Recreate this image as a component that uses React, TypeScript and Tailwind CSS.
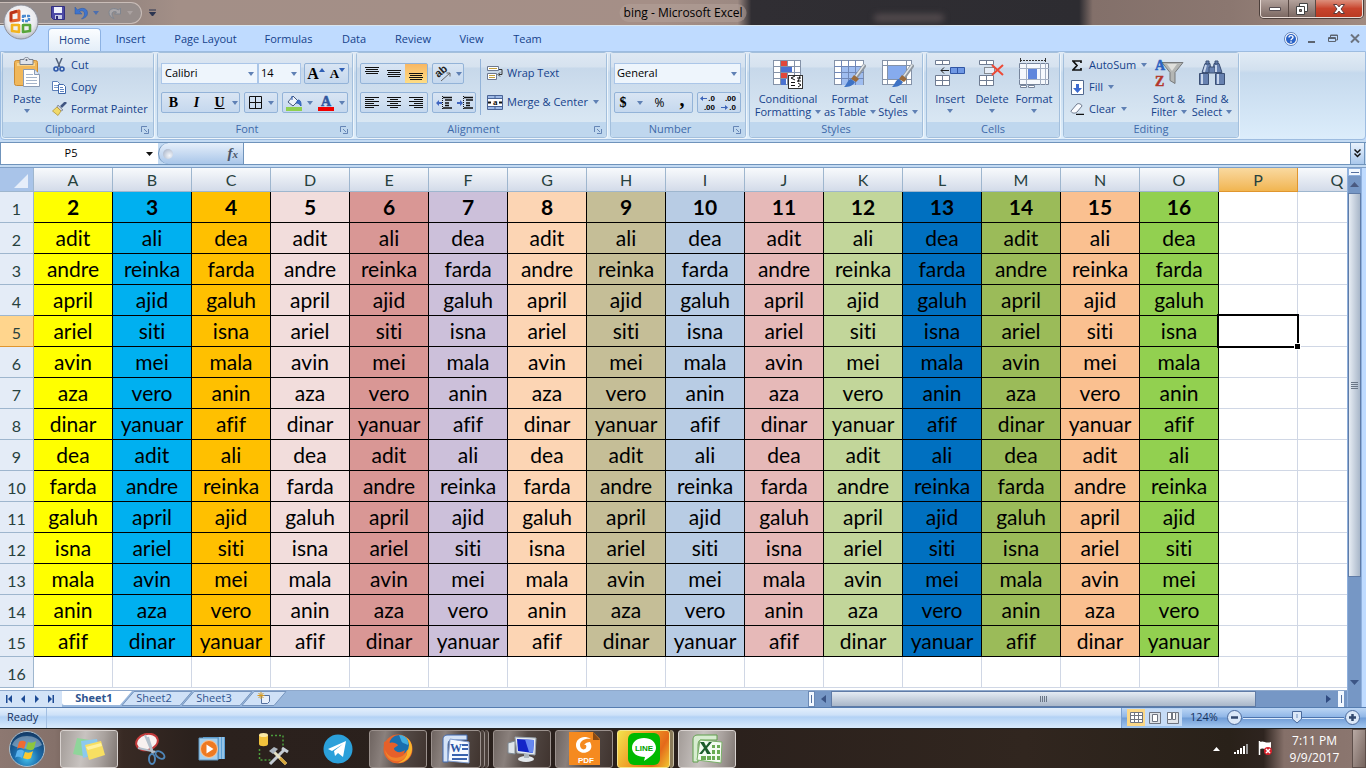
import React from "react";

const UI = "font-['Open_Sans','Noto_Sans',sans-serif]";

function Caret({ className = "text-[#5f80b4]" }: { className?: string }) {
  return (
    <svg width="6" height="4" viewBox="0 0 6 4" className={`shrink-0 ${className}`} aria-hidden="true">
      <path d="M0 0h6L3 4z" fill="currentColor" />
    </svg>
  );
}

/* ---------- Title bar ---------- */

function OfficeLogo() {
  return (
    <svg width="36" height="36" viewBox="0 0 36 36" aria-hidden="true">
      <defs>
        <radialGradient id="orb" cx="50%" cy="40%" r="60%">
          <stop offset="0" stopColor="#ffffff" />
          <stop offset="0.7" stopColor="#e9eaee" />
          <stop offset="1" stopColor="#b9bcc6" />
        </radialGradient>
      </defs>
      <circle cx="18" cy="18" r="17" fill="url(#orb)" stroke="#8d8f99" />
      <g fill="none" strokeLinejoin="round">
        <path d="M8 9l8-2v9l-8 1z" stroke="#e0622f" strokeWidth="3" />
        <path d="M8 17v-8l6-2" stroke="#b8321c" strokeWidth="2.4" />
        <path d="M20 12h6v5h-6z" stroke="#4a8ad0" strokeWidth="2.4" strokeDasharray="3 1" />
        <path d="M9 21h7v7l-7-1z" stroke="#f3b31d" strokeWidth="2.6" />
        <path d="M20 21h7v6l-7 1z" stroke="#57a63a" strokeWidth="2.6" />
      </g>
      <path d="M16 18h4v2h-4z" fill="#fff" />
    </svg>
  );
}

function TitleBar() {
  return (
    <header className="relative flex h-[26px] shrink-0 items-start justify-between border-b border-[#d9e6ef] bg-[linear-gradient(90deg,#77706f_0,#a38f87_13%,#a58f87_48%,#9c8982_54%,#302e33_55%,#2d2c31_79%,#83706a_80%,#8b7770_90%,#a08a80_100%)]">
      <div className="flex h-[25px] items-center">
        <div className="flex h-[22px] items-center gap-[9px] rounded-r-full border border-l-0 border-[#c9bdb8] bg-[#968d8b] pl-[51px] pr-2">
          <button aria-label="Save" type="button">
            <svg width="14" height="14" viewBox="0 0 14 14">
              <path d="M0.5 0.5h13v13h-11l-2-2z" fill="#4c49a5" stroke="#322f80" />
              <path d="M3 1h8v6H3z" fill="#eef1fb" />
              <path d="M4 9h7v4H4z" fill="#c9cde6" />
              <path d="M5 10h2v3H5z" fill="#2d2a75" />
            </svg>
          </button>
          <button aria-label="Undo" type="button" className="flex items-center gap-[5px]">
            <svg width="14" height="14" viewBox="0 0 14 14">
              <path d="M1 1v7h7L5.500 5.500C8 4 10.500 5 10.500 8c0 2-1 3-3 5 4-1 6-3 6-6 0-5-6-6-10-3z" fill="#3f74cc" stroke="#2b56a3" strokeWidth="0.5" />
            </svg>
            <Caret className="text-[#4d6fae]" />
          </button>
          <button aria-label="Redo" type="button" className="flex items-center gap-[5px]">
            <svg width="14" height="14" viewBox="0 0 14 14">
              <path d="M12.500 2v6h-6l2-2C6 5 4 6 4 8c0 2 1 3 2 4.500-3-1-5-3-5-6C1 3 6 1 10.500 4z" fill="#a9a6a9" stroke="#7f858f" />
            </svg>
            <Caret className="text-[#aaa2a1]" />
          </button>
        </div>
        <button aria-label="Customize Quick Access Toolbar" type="button" className="ml-[7px]">
          <svg width="7" height="8" viewBox="0 0 7 8">
            <path d="M0 1h7M0.5 3.5h6L3.5 7z" stroke="#2c3550" fill="#2c3550" strokeWidth="1" />
          </svg>
        </button>
      </div>
      <div className="absolute left-[64%] top-[14px] hidden h-2 w-[70px] rounded-full bg-[#6d5f60]/60 blur-[3px] lg:block" />
      <h1 className="absolute left-1/2 top-1 -translate-x-1/2 rounded-full bg-[#b5a39c]/50 px-1 text-[12px] leading-[18px] whitespace-nowrap text-black">
        bing - Microsoft Excel
      </h1>
      <div className="mr-[3px] flex h-[18px] overflow-hidden rounded-b border border-t-0 border-[#e9dcd6] shadow-[0_0_0_1px_#4c3f3b]">
        <button aria-label="Minimize" type="button" className="flex w-[28px] items-center justify-center border-r border-[#5a4a45] bg-gradient-to-b from-[#b3a29c] to-[#7c6963]">
          <svg width="12" height="6" viewBox="0 0 12 6"><path d="M0.5 1.5h11v3H0.5z" fill="#fff" stroke="#554c50" /></svg>
        </button>
        <button aria-label="Restore" type="button" className="flex w-[27px] items-center justify-center border-r border-[#5a4a45] bg-gradient-to-b from-[#b3a29c] to-[#7c6963]">
          <svg width="12" height="12" viewBox="0 0 12 12">
            <path d="M3.5 0.5h8v8h-8z" fill="#fff" stroke="#444" />
            <path d="M0.5 3.5h8v8h-8z" fill="#fff" stroke="#444" />
            <path d="M3.5 6.5h2v2h-2z" fill="#8b7771" stroke="#444" />
          </svg>
        </button>
        <button aria-label="Close" type="button" className="flex w-[46px] items-center justify-center bg-gradient-to-b from-[#dc8f7c] via-[#c8442d] to-[#b93a22]">
          <svg width="12" height="10" viewBox="0 0 12 10">
            <path d="M0.5 0.5h3.5l2 2.4 2-2.4h3.5L8 5l3.5 4.500H8L6 7.100 4 9.500H0.500L4 5z" fill="#fff" stroke="#5b3b3b" />
          </svg>
        </button>
      </div>
      <button aria-label="Office Button" type="button" className="absolute left-[3px] top-1 z-10">
        <OfficeLogo />
      </button>
    </header>
  );
}

/* ---------- Tabs ---------- */

const TABS = [
  { name: "Insert", w: "w-[59px]" },
  { name: "Page Layout", w: "w-[91px]" },
  { name: "Formulas", w: "w-[75px]" },
  { name: "Data", w: "w-[56px]" },
  { name: "Review", w: "w-[62px]" },
  { name: "View", w: "w-[55px]" },
  { name: "Team", w: "w-[57px]" },
];

function TabBar() {
  return (
    <nav className="flex h-[25px] shrink-0 items-end bg-[#bfdbff] pl-12 text-[11px] text-[#15428b]">
      <button type="button" className="h-[23px] w-[53px] rounded-t border border-b-0 border-[#8db2e3] bg-gradient-to-b from-[#fbfdff] to-[#e4eef8]">Home</button>
      {TABS.map((t) => (
        <button key={t.name} type="button" className={`h-[23px] whitespace-nowrap ${t.w}`}>{t.name}</button>
      ))}
      <div className="ml-auto flex h-full items-center gap-3 pr-[6px]">
        <button aria-label="Help" type="button" className="mr-[-2px]">
          <svg width="14" height="14" viewBox="0 0 14 14">
            <circle cx="7" cy="7" r="6.500" fill="#fff" stroke="#5f80b8" />
            <circle cx="7" cy="7" r="5" fill="#2a63c8" />
            <path d="M5 5.500C5 3 9 3 9 5.300 9 6.800 7 6.700 7 8.200M7 9.300v1.400" stroke="#fff" strokeWidth="1.400" fill="none" />
          </svg>
        </button>
        <button aria-label="Minimize workbook" type="button">
          <svg width="8" height="10" viewBox="0 0 8 10"><path d="M0 8h7" stroke="#5c6470" strokeWidth="2" /></svg>
        </button>
        <button aria-label="Restore workbook" type="button">
          <svg width="10" height="9" viewBox="0 0 10 9">
            <path d="M2.500 3V1h7v5H7.500M0.500 3.500h7v4h-7zM0.500 4.500h7M2.500 1.500h7" stroke="#5c6470" fill="none" />
          </svg>
        </button>
        <button aria-label="Close workbook" type="button">
          <svg width="10" height="9" viewBox="0 0 10 9"><path d="M1 0.500l8 8M9 0.500l-8 8" stroke="#6c7480" strokeWidth="2" /></svg>
        </button>
      </div>
    </nav>
  );
}

/* ---------- Ribbon ---------- */

function Group({ label, width, launcher, children }: { label: string; width: string; launcher?: boolean; children: React.ReactNode }) {
  return (
    <section aria-label={label} className={`flex h-[86px] shrink-0 flex-col rounded-[3px] border border-[#a3bfdc] shadow-[1px_1px_0_#eef5fb] ${width}`}>
      <div className="flex min-h-0 flex-1 bg-[linear-gradient(#dee8f3,#d6e2ef_20%,#c7d8ea_22%,#d9e7f3)]">{children}</div>
      <div className="relative flex h-[15px] shrink-0 items-center justify-center rounded-b-[3px] bg-[#bfd7ee] text-[11px] text-[#3e6aaa]">
        <h2 className={launcher ? "pr-4" : ""}>{label}</h2>
        {launcher && (
          <button aria-label={`${label} options`} type="button" className="absolute right-1 top-1">
            <svg width="8" height="8" viewBox="0 0 8 8">
              <path d="M0.500 6V0.500H6M3 3l3 3M7.500 3v4.500H3" fill="none" stroke="#6585b5" />
            </svg>
          </button>
        )}
      </div>
    </section>
  );
}

function Box({ children, className = "" }: { children: React.ReactNode; className?: string }) {
  return (
    <div className={`flex h-[21px] items-stretch rounded-[2px] border border-[#93b3d8] bg-gradient-to-b from-[#d9e5f3] to-[#c5d8ee] ${className}`}>{children}</div>
  );
}

function Tool({ label, className = "w-[23px]", children }: { label: string; className?: string; children: React.ReactNode }) {
  return (
    <button type="button" aria-label={label} className={`flex items-center justify-center ${className}`}>{children}</button>
  );
}

function Small({ icon, label, caret }: { icon: React.ReactNode; label: string; caret?: boolean }) {
  return (
    <button type="button" className="flex h-[22px] items-center gap-1 whitespace-nowrap">
      <span className="flex w-4 justify-center">{icon}</span>
      <span>{label}</span>
      {caret && <span className="ml-px"><Caret /></span>}
    </button>
  );
}

function Big({ icon, lines, width, caretBelow }: { icon: React.ReactNode; lines: string[]; width: string; caretBelow?: boolean }) {
  return (
    <button type="button" className={`flex flex-col items-center pt-1 leading-[13px] whitespace-nowrap ${width}`}>
      <span className="flex h-8 items-center">{icon}</span>
      <span className="mt-[3px]">{lines[0]}</span>
      {caretBelow ? (
        <span className="mt-1"><Caret /></span>
      ) : (
        <span className="flex items-center gap-1">{lines[1]}<Caret /></span>
      )}
    </button>
  );
}

function PasteIcon() {
  return (
    <svg width="28" height="32" viewBox="0 0 28 32" aria-hidden="true">
      <rect x="1.500" y="3.500" width="23" height="25" rx="2" fill="#f0b75a" stroke="#c98b35" />
      <path d="M4 6h18v3H4z" fill="#f8d48c" />
      <path d="M7 2.500h4c0-3 5-3 5 0h4v5H7z" fill="#dfe3ea" stroke="#77808f" />
      <circle cx="13.500" cy="3" r="1" fill="#5b6575" />
      <path d="M10.500 12.500h11l5 5v12h-16z" fill="#fff" stroke="#8a9bb5" />
      <path d="M21.500 12.500v5h5" fill="#dce6f3" stroke="#8a9bb5" />
      <path d="M13 17.500h7M13 20.500h11M13 23.500h11M13 26.500h11" stroke="#a5b4ca" />
    </svg>
  );
}

function CutIcon() {
  return (
    <svg width="12" height="14" viewBox="0 0 12 14" aria-hidden="true">
      <path d="M3 0l4 9M9 0L5 9" stroke="#56647c" strokeWidth="1.500" />
      <circle cx="3" cy="11" r="2" fill="none" stroke="#2e57a8" strokeWidth="1.600" />
      <circle cx="9" cy="11" r="2" fill="none" stroke="#2e57a8" strokeWidth="1.600" />
    </svg>
  );
}

function CopyIcon() {
  return (
    <svg width="16" height="13" viewBox="0 0 16 13" aria-hidden="true">
      <path d="M1.500 0.500h5l2 2v7h-7z" fill="#fff" stroke="#5c7fb8" />
      <path d="M3 4.500h4M3 6.500h4" stroke="#7b9bcb" />
      <path d="M7.500 3.500h5l2 2v7h-7z" fill="#fff" stroke="#3f68ab" />
      <path d="M9 6.500h3M9 8.500h4M9 10.500h4" stroke="#5f86c2" />
    </svg>
  );
}

function BrushIcon() {
  return (
    <svg width="15" height="14" viewBox="0 0 15 14" aria-hidden="true">
      <path d="M14 0L9 5" stroke="#3f5480" strokeWidth="2.600" />
      <path d="M6 3l5 5-2 1-4-4z" fill="#c7ccd6" stroke="#6e788c" strokeWidth="0.700" />
      <path d="M5 5l4 4-3 4.500L0.500 9z" fill="#f0d96a" stroke="#b4973a" strokeWidth="0.800" />
    </svg>
  );
}

function Lines({ rows, top = 0 }: { rows: [number, number][]; top?: number }) {
  return (
    <svg width="15" height="15" viewBox="0 0 15 15" aria-hidden="true">
      {rows.map(([x, w], i) => (
        <rect key={i} x={x} y={top + i * 2} width={w} height="1" fill="#111" />
      ))}
    </svg>
  );
}

const VERTICAL_ROWS: [number, number][] = [[0, 14], [1, 12], [0, 14], [1, 12]];

function IndentIcon({ right }: { right?: boolean }) {
  return (
    <svg width="16" height="14" viewBox="0 0 16 14" aria-hidden="true">
      <path d="M7 1.500h9M9 4h7M9 7h4M9 9.500h4M7 12h9" stroke="#111" strokeWidth="1.500" />
      <path d="M6.500 0v14" stroke="#111" strokeDasharray="1 1" />
      <path d={right ? "M0 6h3V4l3 3-3 3V8H0z" : "M6 6H3V4L0 7l3 3V8h3z"} fill="#4065c0" />
    </svg>
  );
}

function SheetGrid({ children, w = 30 }: { children?: React.ReactNode; w?: number }) {
  return (
    <svg width={w + 2} height="31" viewBox={`0 0 ${w + 2} 31`} aria-hidden="true">
      <rect x="0.500" y="2.500" width={w - 1} height="24" fill="#fff" stroke="#8492a8" />
      {children}
    </svg>
  );
}

function PaintBrush() {
  return (
    <g>
      <path d="M30 8L22 19" stroke="#8f979f" strokeWidth="4" strokeLinecap="round" />
      <path d="M30 7L22 18" stroke="#dfe3e6" strokeWidth="1.500" strokeLinecap="round" />
      <path d="M20 17l5 4-3 3-5-3z" fill="#9a6b3c" />
      <path d="M17 21l4 3c-2 4-6 5-11 5 3-2 3-7 7-8z" fill="#3e72c4" />
    </g>
  );
}

function ConditionalIcon() {
  return (
    <SheetGrid w={28}>
      <path d="M7 3h7v5H7zM7 15h8v6H7z" fill="#e2483a" />
      <path d="M7 9h12v6H7zM7 21h6v6H7z" fill="#4a72d0" />
      <path d="M0 8.500h28M0 14.500h28M0 20.500h28M7.500 2v25M14.500 2v25M21.500 2v25" stroke="#8492a8" />
      <path d="M8 9h11v5H8z" fill="#4a72d0" />
      <rect x="15.500" y="17.500" width="14" height="13" fill="#fff" stroke="#333" />
      <path d="M22 18l-4 2 4 2M18 24.500h4M18 27.500h4M24 20h4M24 23h4M27 18l-2 6M25 25l3 2-3 2" stroke="#111" fill="none" />
    </SheetGrid>
  );
}

function FormatTableIcon() {
  return (
    <SheetGrid>
      <path d="M7 9h22v18H7z" fill="#9fbdf0" />
      <path d="M0 8.500h30M0 14.500h30M0 20.500h30M7.500 2v25M14.500 2v25M21.500 2v25" stroke="#7088b8" />
      <PaintBrush />
    </SheetGrid>
  );
}

function CellStylesIcon() {
  return (
    <SheetGrid>
      <path d="M0 7.500h30M0 21.500h30M5.500 2v25M24.500 2v25" stroke="#8492a8" />
      <path d="M6 8h18v13H6z" fill="#86abee" />
      <PaintBrush />
    </SheetGrid>
  );
}

function InsertIcon() {
  return (
    <svg width="31" height="28" viewBox="0 0 31 28" aria-hidden="true">
      <path d="M0.500 1.500h14v4h-14zM7.500 1v5M0.500 16.500h14v10h-14zM0.500 21.500h14M7.500 16v10" fill="#fff" stroke="#6f7c92" />
      <path d="M15.500 8.500h14v6h-14z" fill="#6f98e4" stroke="#3156a5" />
      <path d="M22.500 8v7" stroke="#3156a5" />
      <path d="M14 11.500H6M9 8.500l-3 3 3 3" stroke="#222" fill="none" />
    </svg>
  );
}

function DeleteIcon() {
  return (
    <svg width="26" height="28" viewBox="0 0 26 28" aria-hidden="true">
      <path d="M0.500 1.500h14v4h-14zM7.500 1v5M0.500 16.500h14v10h-14zM0.500 21.500h14M7.500 16v10" fill="#fff" stroke="#6f7c92" />
      <path d="M5.500 8.500h10v6h-10z" fill="#e6edf7" stroke="#333" strokeDasharray="1 1" />
      <path d="M13 6l11 10M24 6L13 16" stroke="#ee4a36" strokeWidth="2" />
    </svg>
  );
}

function FormatIcon() {
  return (
    <svg width="32" height="31" viewBox="0 0 32 31" aria-hidden="true">
      <path d="M2 2.500h26M2.500 0v4M27.500 0v4" stroke="#333" strokeDasharray="2 1" />
      <path d="M1.500 5.500h29v21h-29z" fill="#f6f9fd" stroke="#76849b" />
      <path d="M1 10.500h30M1 21.500h30M8.500 5v22M22.500 5v22M27.500 5v22" stroke="#a3afc2" />
      <path d="M10 11h9v10h-9z" fill="#5f86dc" />
      <path d="M2.500 27.500h6v2h-6zM10.500 27.500h6v2h-6z" fill="#fff" stroke="#76849b" />
    </svg>
  );
}

function SortIcon() {
  return (
    <svg width="30" height="32" viewBox="0 0 30 32" className="overflow-visible" aria-hidden="true">
      <path d="M8 5.500h21l-8 10v11l-5-3v-8z" fill="#b4b6b4" stroke="#77797b" />
      <path d="M13 7h10l-5 7z" fill="#e0e0dc" />
      <text x="1" y="13" fontSize="14" fontWeight="bold" fill="#2c62c0" stroke="#2c62c0" strokeWidth="0.500" fontFamily="Liberation Serif, serif">A</text>
      <text x="1" y="29" fontSize="14" fontWeight="bold" fill="#b3362b" stroke="#b3362b" strokeWidth="0.500" fontFamily="Liberation Serif, serif">Z</text>
    </svg>
  );
}

function FindIcon() {
  return (
    <svg width="28" height="27" viewBox="0 0 28 27" aria-hidden="true">
      <g fill="#6781b0" stroke="#3c5075">
        <path d="M7 3.500h5l1 9H4z M16 3.500h5l3 9h-9z" />
        <path d="M11 7h6v6h-6z" />
        <path d="M1.500 13.500h9v11h-9zM17.500 13.500h9v11h-9z" />
        <path d="M8 1h3v3H8zM17 1h3v3h-3z" />
      </g>
      <path d="M4 14v10M20 14v10M8 5l-2 7M18 5v7" stroke="#c8d6ec" strokeWidth="2" />
    </svg>
  );
}

function Ribbon() {
  const serif = "font-['Liberation_Serif',serif]";
  return (
    <div className="flex h-[89px] shrink-0 gap-[3px] overflow-hidden rounded-b border border-[#9dbce0] bg-[linear-gradient(#e1ebf5,#d3e1ef_20%,#c5d9ed_24%,#dcedfb)] pl-px text-[11px] text-[#15428b]">
      <Group label="Clipboard" width="w-[152px]" launcher>
        <Big icon={<PasteIcon />} lines={["Paste"]} width="w-12" caretBelow />
        <div className="flex flex-col pt-px">
          <Small icon={<CutIcon />} label="Cut" />
          <Small icon={<CopyIcon />} label="Copy" />
          <Small icon={<BrushIcon />} label="Format Painter" />
        </div>
      </Group>

      <Group label="Font" width="w-[196px]" launcher>
        <div className="flex flex-col gap-2 pl-[3px] pt-[10px] text-black">
          <div className="flex">
            <label className="relative flex items-center">
              <select aria-label="Font" className="h-[21px] w-[97px] appearance-none border border-[#abc6e8] bg-[#eef5fc] pl-[3px] text-[11px]"><option>Calibri</option></select>
              <span className="absolute right-1"><Caret /></span>
            </label>
            <label className="relative flex items-center">
              <select aria-label="Font Size" className="h-[21px] w-[43px] appearance-none border border-[#abc6e8] bg-[#eef5fc] pl-[2px] text-[11px]"><option>14</option></select>
              <span className="absolute right-1"><Caret /></span>
            </label>
            <Box className="ml-[3px]">
              <Tool label="Grow Font" className="w-[22px]"><b className={`text-[16px] leading-[19px] ${serif}`}>A</b><span className="mb-2 rotate-180"><Caret className="text-[#2f5fb5]" /></span></Tool>
              <Tool label="Shrink Font" className="w-[21px]"><b className={`text-[13px] leading-[19px] ${serif}`}>A</b><span className="mb-2"><Caret className="text-[#2f5fb5]" /></span></Tool>
            </Box>
          </div>
          <div className="flex gap-1">
            <Box>
              <Tool label="Bold"><b className={`text-[14px] leading-[19px] ${serif}`}>B</b></Tool>
              <Tool label="Italic"><b className={`text-[14px] leading-[19px] italic ${serif}`}>I</b></Tool>
              <Tool label="Underline"><b className={`text-[14px] leading-[19px] underline ${serif}`}>U</b></Tool>
              <Tool label="Underline options" className="w-2"><Caret /></Tool>
            </Box>
            <Box>
              <Tool label="Borders" className="w-8 gap-1.5">
                <svg width="13" height="13" viewBox="0 0 13 13"><path d="M0.500 0.500h12v12h-12zM6.500 0v13M0 6.500h13" fill="none" stroke="#111" /></svg>
                <Caret />
              </Tool>
            </Box>
            <Box>
              <Tool label="Fill Color" className="w-8 gap-1">
                <svg width="17" height="16" viewBox="0 0 17 16">
                  <path d="M7 1L2 7l5 4 5-5z" fill="#eef3fb" stroke="#44577c" />
                  <path d="M6 5V1M12 5c3 0 3 3 3 6-2-2-2-3-5-3z" stroke="#2f5fb5" fill="#3d6fc9" />
                  <rect x="0" y="12" width="16" height="4" fill="#8fd050" />
                </svg>
                <Caret />
              </Tool>
              <Tool label="Font Color" className="w-8 gap-1">
                <svg width="17" height="16" viewBox="0 0 17 16" className="overflow-visible">
                  <text x="3" y="11" fontSize="14" fontWeight="bold" fill="#31579d" stroke="#31579d" strokeWidth="0.500" fontFamily="Liberation Serif, serif">A</text>
                  <rect x="0" y="12" width="16" height="4" fill="#f00000" />
                </svg>
                <Caret />
              </Tool>
            </Box>
          </div>
        </div>
      </Group>

      <Group label="Alignment" width="w-[251px]" launcher>
        <div className="flex flex-col gap-2 pl-[3px] pt-[10px]">
          <div className="flex gap-1">
            <Box>
              <Tool label="Top Align" className="w-[22px]"><Lines rows={VERTICAL_ROWS} top={1} /></Tool>
              <Tool label="Middle Align" className="w-[22px]"><Lines rows={VERTICAL_ROWS} top={4} /></Tool>
              <Tool label="Bottom Align" className="w-[22px] bg-gradient-to-b from-[#f8b763] to-[#fedd85]"><Lines rows={VERTICAL_ROWS} top={7} /></Tool>
            </Box>
            <Box>
              <Tool label="Orientation" className="w-[30px] gap-1">
                <svg width="17" height="17" viewBox="0 0 17 17" className="overflow-visible">
                  <text x="1" y="11" fontSize="11" fill="#222" fontWeight="bold" fontFamily="Liberation Sans, sans-serif" transform="rotate(-40 5 9)">ab</text>
                  <path d="M6 16l9-8M11.500 8H15v3.500" stroke="#666" fill="none" />
                </svg>
                <Caret />
              </Tool>
            </Box>
          </div>
          <div className="flex gap-1">
            <Box>
              <Tool label="Align Left" className="w-[22px]"><Lines rows={[[0, 14], [0, 9], [0, 14], [0, 9], [0, 14], [0, 9]]} top={2} /></Tool>
              <Tool label="Center" className="w-[22px]"><Lines rows={[[0, 14], [3, 8], [0, 14], [3, 8], [0, 14], [3, 8]]} top={2} /></Tool>
              <Tool label="Align Right" className="w-[22px]"><Lines rows={[[0, 14], [5, 9], [0, 14], [5, 9], [0, 14], [5, 9]]} top={2} /></Tool>
            </Box>
            <Box>
              <Tool label="Decrease Indent" className="w-[21px]"><IndentIcon /></Tool>
              <Tool label="Increase Indent" className="w-[21px]"><IndentIcon right /></Tool>
            </Box>
          </div>
        </div>
        <div className="ml-1 mt-1.5 h-14 border-l border-[#93b3d8]" />
        <div className="flex flex-col gap-[7px] pl-[6px] pt-[9px]">
          <Small
            label="Wrap Text"
            icon={
              <svg width="16" height="16" viewBox="0 0 16 16">
                <path d="M0.500 1.500h11v4h-11zM0.500 8.500h9v6h-9z" fill="#fff" stroke="#6b7890" />
                <path d="M2 3.500h8M2 10.500h6M2 12.500h6" stroke="#c2a040" />
                <path d="M12 4.500h3v5h-3M13 7.500l-2 2 2 2" stroke="#333" fill="none" />
              </svg>
            }
          />
          <Small
            label="Merge & Center"
            caret
            icon={
              <svg width="16" height="15" viewBox="0 0 16 15">
                <path d="M0.500 0.500h15v14h-15z" fill="#9db9e6" stroke="#4a6496" />
                <path d="M1 4h14v7H1z" fill="#fff" />
                <path d="M0.500 3.500h15M0.500 11.500h15M8 0.500v3M8 11.500v3" stroke="#4a6496" />
                <text x="6" y="10" fontSize="9" fontWeight="bold" fill="#111" fontFamily="Liberation Serif, serif">a</text>
                <path d="M1 7.500h3M12 7.500h3" stroke="#111" strokeWidth="2" />
              </svg>
            }
          />
        </div>
      </Group>

      <Group label="Number" width="w-[136px]" launcher>
        <div className="flex flex-col gap-2 pl-[3px] pt-[10px] text-black">
          <label className="relative flex items-center">
            <select aria-label="Number Format" className="h-[21px] w-[127px] appearance-none border border-[#abc6e8] bg-[#eef5fc] pl-[2px] text-[11px]"><option>General</option></select>
            <span className="absolute right-1"><Caret /></span>
          </label>
          <div className="flex gap-1">
            <Box>
              <Tool label="Accounting Number Format" className="w-8 gap-2.5"><b className={`text-[14px] leading-[19px] ${serif}`}>$</b><Caret /></Tool>
              <Tool label="Percent Style" className="w-[25px]"><span className="text-[12px]">%</span></Tool>
              <Tool label="Comma Style" className="w-5"><b className={`pb-2 text-[20px] leading-4 ${serif}`}>,</b></Tool>
            </Box>
            <Box className="font-['Liberation_Sans',sans-serif] text-[8px] leading-[9px] font-bold">
              <Tool label="Increase Decimal" className="w-[21px] flex-col">
                <span className="flex items-center gap-px self-end pr-1">
                  <svg width="7" height="5" viewBox="0 0 7 5"><path d="M3 0v2h4v1H3v2L0 2.500z" fill="#3d64b8" /></svg>.0
                </span>
                <span className="self-end pr-1">.00</span>
              </Tool>
              <Tool label="Decrease Decimal" className="w-[21px] flex-col">
                <span className="self-end pr-1">.00</span>
                <span className="flex items-center gap-px self-end pr-1">
                  <svg width="7" height="5" viewBox="0 0 7 5"><path d="M4 0v2H0v1h4v2l3-2.500z" fill="#3d64b8" /></svg>.0
                </span>
              </Tool>
            </Box>
          </div>
        </div>
      </Group>

      <Group label="Styles" width="w-[174px]">
        <Big icon={<ConditionalIcon />} lines={["Conditional", "Formatting"]} width="w-[76px]" />
        <Big icon={<FormatTableIcon />} lines={["Format", "as Table"]} width="w-[48px]" />
        <Big icon={<CellStylesIcon />} lines={["Cell", "Styles"]} width="w-[48px]" />
      </Group>

      <Group label="Cells" width="w-[134px]">
        <div className="flex pl-[2px]">
          <Big icon={<InsertIcon />} lines={["Insert"]} width="w-[42px]" caretBelow />
          <Big icon={<DeleteIcon />} lines={["Delete"]} width="w-[42px]" caretBelow />
          <Big icon={<FormatIcon />} lines={["Format"]} width="w-[42px]" caretBelow />
        </div>
      </Group>

      <Group label="Editing" width="w-[176px]">
        <div className="flex w-[84px] flex-col pl-[5px] pt-px">
          <Small label="AutoSum" caret icon={<svg width="10" height="11" viewBox="0 0 10 11"><path d="M9 3V1H1l4 4.500L1 10h8V8" fill="none" stroke="#111" strokeWidth="1.700" /></svg>} />
          <Small
            label="Fill"
            caret
            icon={
              <svg width="13" height="15" viewBox="0 0 13 15">
                <path d="M0.500 0.500h12v14h-12z" fill="#fff" stroke="#51688f" />
                <path d="M5 4h3v4h3l-4.500 5L2 8h3z" fill="#3c6bd0" />
              </svg>
            }
          />
          <Small
            label="Clear"
            caret
            icon={
              <svg width="14" height="12" viewBox="0 0 14 12">
                <path d="M1 8l6-7c1-1 5 0 5 2l-5 6c-2 2-6 1-6-1z" fill="#fbfcff" stroke="#6e7a8e" />
                <path d="M6 11.500h8" stroke="#111" strokeWidth="1.500" />
              </svg>
            }
          />
        </div>
        <Big icon={<SortIcon />} lines={["Sort &", "Filter"]} width="w-[42px]" />
        <Big icon={<FindIcon />} lines={["Find &", "Select"]} width="w-[44px]" />
      </Group>
    </div>
  );
}

/* ---------- Formula bar ---------- */

function FormulaBar() {
  return (
    <div className="flex h-[28px] shrink-0 flex-col justify-center border-b border-[#7f9fc6] bg-[#c4dbf3]">
      <div className="flex h-[23px] items-stretch border-y border-[#6f93bb] text-[11px]">
        <div className="flex w-[158px] items-center border-l border-[#6f93bb] bg-white">
          <input aria-label="Name Box" defaultValue="P5" className="w-[140px] bg-transparent text-center outline-none" />
          <button type="button" aria-label="Name Box list" className="ml-[5px]"><svg width="7" height="4" viewBox="0 0 7 4"><path d="M0 0h7L3.500 4z" fill="#111" /></svg></button>
        </div>
        <div className="flex w-[86px] items-center justify-between rounded-l-full border-x border-[#6f93bb] bg-gradient-to-b from-[#e6effa] to-[#a9c6e9] pl-1 pr-[5px]">
          <span className="h-[10px] w-[10px] rounded-full bg-[radial-gradient(circle_at_65%_65%,#f4f6fa,#9dabc2)]" />
          <button type="button" aria-label="Insert Function" className="font-['Liberation_Serif',serif] text-[15px] leading-5 font-bold text-[#4a5568] italic">f<span className="text-[11px]">x</span></button>
        </div>
        <input aria-label="Formula Bar" className="min-w-0 flex-1 bg-white px-1 outline-none" />
        <button type="button" aria-label="Expand Formula Bar" className="mr-px flex w-[15px] items-center justify-center border-x border-[#6f93bb] bg-gradient-to-b from-[#e9f2fc] to-[#aac8ec]">
          <svg width="7" height="9" viewBox="0 0 7 9"><path d="M0.500 0.500l3 3 3-3M0.500 4.500l3 3 3-3" stroke="#111" fill="none" strokeWidth="1.500" /></svg>
        </button>
      </div>
    </div>
  );
}

/* ---------- Sheet ---------- */

const COLUMNS = "ABCDEFGHIJKLMNOPQ".split("");

const FILLS = [
  "bg-[#ffff00]", "bg-[#00b0f0]", "bg-[#ffc000]", "bg-[#f2dddc]", "bg-[#d99795]",
  "bg-[#ccc0da]", "bg-[#fcd5b4]", "bg-[#c5be97]", "bg-[#b8cce4]", "bg-[#e6b9b8]",
  "bg-[#c2d69a]", "bg-[#0070c0]", "bg-[#9bbb59]", "bg-[#fac090]", "bg-[#92d050]",
];

const ROSTERS = [
  ["adit", "andre", "april", "ariel", "avin", "aza", "dinar", "dea", "farda", "galuh", "isna", "mala", "anin", "afif"],
  ["ali", "reinka", "ajid", "siti", "mei", "vero", "yanuar", "adit", "andre", "april", "ariel", "avin", "aza", "dinar"],
  ["dea", "farda", "galuh", "isna", "mala", "anin", "afif", "ali", "reinka", "ajid", "siti", "mei", "vero", "yanuar"],
];

const ROWS = Array.from({ length: 16 }, (_, i) => i + 1);

function cellText(row: number, col: number): string {
  if (row > 15 || col > 14) return "";
  return row === 1 ? String(col + 2) : ROSTERS[col % 3][row - 2];
}

function Sheet() {
  return (
    <div className="min-h-0 flex-1 overflow-hidden bg-white">
      <table className="w-[1377px] table-fixed border-separate border-spacing-0 text-center font-['Lato','Open_Sans',sans-serif] [font-variant-ligatures:none]">
        <colgroup>
          <col className="w-[34px]" />
          {COLUMNS.map((c) => <col key={c} className="w-[79px]" />)}
        </colgroup>
        <thead>
          <tr className="h-6 text-[16px] leading-[23px] text-[#27413e]">
            <th aria-label="Select all" className="border-r border-b border-[#9eb6ce] bg-[#a9c4e9] p-0">
              <svg width="15" height="15" viewBox="0 0 15 15" className="ml-auto mr-1 mt-1"><path d="M14 0v14H0z" fill="#e6eefa" /></svg>
            </th>
            {COLUMNS.map((c) => (
              <th key={c} scope="col" className={`border-r border-b p-0 font-normal ${c === "P" ? "border-[#e0962e] bg-gradient-to-b from-[#f9d99f] to-[#f1b54f]" : "border-[#9eb6ce] bg-gradient-to-b from-[#f8fafc] to-[#d3dbe9]"}`}>{c}</th>
            ))}
          </tr>
        </thead>
        <tbody>
          {ROWS.map((r) => (
            <tr key={r} className="h-[31px] text-[21px] leading-[30px] text-black">
              <th scope="row" className={`border-r border-b p-0 pt-1 text-[16px] leading-[26px] font-normal text-[#27413e] ${r === 5 ? "border-[#e0962e] bg-[#ffd58d]" : "border-[#9eb6ce] bg-[#e4ecf7]"}`}>{r}</th>
              {COLUMNS.map((c, i) => {
                const filled = i < 15 && r < 16;
                return (
                  <td key={c} className={`relative border-r border-b p-0 ${filled ? `border-black ${FILLS[i]}` : "border-[#d0d7e5]"} ${r === 1 ? "font-bold" : ""}`}>
                    {cellText(r, i)}
                    {c === "P" && r === 5 && (
                      <span className="absolute -inset-[2px] z-10 border-2 border-black">
                        <span className="absolute -right-[3px] -bottom-[3px] h-[5px] w-[5px] bg-black outline outline-1 outline-white" />
                      </span>
                    )}
                  </td>
                );
              })}
            </tr>
          ))}
        </tbody>
      </table>
    </div>
  );
}

function NavArrow({ label, d }: { label: string; d: string }) {
  return (
    <button type="button" aria-label={label} className="flex w-[14px] justify-center">
      <svg width="8" height="8" viewBox="0 0 8 8"><path d={d} fill="#1d4a94" /></svg>
    </button>
  );
}

function SheetTab({ name, active }: { name?: string; active?: boolean }) {
  return (
    <button type="button" aria-label={name ?? "Insert Worksheet"} className="relative flex h-[15px] w-[60px] items-center justify-center">
      <svg width="70" height="16" viewBox="0 0 70 16" className="absolute left-0 top-0">
        <path d={active ? "M0 0H70L58 14H2Q0 14 0 12z" : name ? "M12 0.500H70L58 14.500H0z" : "M12 0.500H44L32 14.500H0z"} fill={active ? "#fff" : "#cfe1f7"} stroke={active ? "none" : "#7795be"} />
      </svg>
      {name ? (
        <span className={`relative pl-1 ${active ? "font-bold" : ""}`}>{name}</span>
      ) : (
        <svg width="14" height="13" viewBox="0 0 14 13" className="relative mr-4">
          <path d="M4.500 3.500h8v6l-2 2h-6z" fill="#e8f0fb" stroke="#54709f" />
          <path d="M4 0v7M0.500 3.500h7M1.500 1l5 5M6.500 1l-5 5" stroke="#d69a22" />
        </svg>
      )}
    </button>
  );
}

function SheetBar() {
  return (
    <div className="flex h-[17px] shrink-0 border-t border-[#8fa9cc] bg-[#99b7dc] text-[11px] text-[#2f548f]">
      <div className="flex w-[62px] items-center bg-[#d3e3f7] pl-[2px]">
        <NavArrow label="First sheet" d="M1 0h1.500v8H1zM7 0v8L3 4z" />
        <NavArrow label="Previous sheet" d="M6 0v8L2 4z" />
        <NavArrow label="Next sheet" d="M2 0v8l4-4z" />
        <NavArrow label="Last sheet" d="M5.500 0H7v8H5.500zM1 0v8l4-4z" />
      </div>
      <SheetTab name="Sheet1" active />
      <SheetTab name="Sheet2" />
      <SheetTab name="Sheet3" />
      <SheetTab />
      <div className="ml-auto flex w-[539px] items-stretch bg-[#7697c5]">
        <div className="flex w-[7px] items-center justify-center border border-[#6a89b5] bg-[#f2f8ff]"><span className="h-2 border-l border-[#54709f]" /></div>
        <button type="button" aria-label="Scroll left" className="flex w-4 items-center justify-center"><svg width="5" height="8" viewBox="0 0 5 8"><path d="M5 0v8L0 4z" fill="#3c5585" /></svg></button>
        <div className="flex w-[425px] items-center justify-center gap-px border border-[#5f7ba6] bg-gradient-to-b from-[#e4ebf3] to-[#a9b7c9]">
          <span className="h-[6px] w-px bg-[#6a7686]" /><span className="h-[6px] w-px bg-[#6a7686]" /><span className="h-[6px] w-px bg-[#6a7686]" /><span className="h-[6px] w-px bg-[#6a7686]" />
        </div>
        <button type="button" aria-label="Scroll right" className="ml-auto mr-[7px] flex w-[5px] items-center"><svg width="5" height="8" viewBox="0 0 5 8"><path d="M0 0v8l5-4z" fill="#2f4a80" /></svg></button>
        <div className="mr-[3px] flex w-[6px] items-center justify-center bg-[#f2f8ff]"><span className="h-2 border-l border-[#54709f]" /></div>
      </div>
    </div>
  );
}

function VerticalScroll() {
  return (
    <div className="mr-1 flex w-[15px] shrink-0 flex-col border-x border-[#8fb0dd] bg-[#7697c5]">
      <div className="flex h-[8px] items-center justify-center border border-[#8fb0dd] bg-[#f2f8ff]"><span className="w-2 border-t border-[#54709f]" /></div>
      <button type="button" aria-label="Scroll up" className="flex h-[17px] items-center justify-center"><svg width="9" height="5" viewBox="0 0 9 5"><path d="M0 5h9L4.500 0z" fill="#4a5a80" /></svg></button>
      <div className="flex min-h-0 flex-[384_1_0%] flex-col items-center justify-center gap-px border border-[#5f7ba6] bg-gradient-to-r from-[#e6ecf3] to-[#a9b7c9]">
        <span className="h-px w-[7px] bg-[#6a7686]" /><span className="h-px w-[7px] bg-[#6a7686]" /><span className="h-px w-[7px] bg-[#6a7686]" /><span className="h-px w-[7px] bg-[#6a7686]" />
      </div>
      <div className="flex-[97_1_0%]" />
      <button type="button" aria-label="Scroll down" className="flex h-[17px] items-center justify-center"><svg width="9" height="5" viewBox="0 0 9 5"><path d="M0 0h9L4.500 5z" fill="#3c5585" /></svg></button>
      <div className="h-4" />
    </div>
  );
}

/* ---------- Status bar ---------- */

function StatusBar() {
  return (
    <footer className="flex h-[21px] shrink-0 items-center border-t border-[#567db0] bg-[linear-gradient(#e3effc,#cde1f8_35%,#b3d2f5_45%,#d8eafc)] text-[11px] text-[#15428b]">
      <span className="flex h-full w-[47px] items-center border-r border-[#a3c0e3] pb-[2px] pl-[7px] text-[#15325f]">Ready</span>
      <div className="ml-auto flex h-full items-center border-l border-[#7ba0d0] bg-[linear-gradient(#bcd6f5,#8fb6e6_45%,#6f9cd6_50%,#a4c8f0)] pb-px pl-[5px] pr-[5px]">
        <button type="button" aria-label="Normal view" className="flex h-[17px] w-[18px] items-center justify-center bg-[#fbd887]">
          <svg width="13" height="11" viewBox="0 0 13 11"><path d="M0.500 0.500h12v10h-12zM4.500 0v11M8.500 0v11M0 3.500h13M0 7.500h13" fill="#fff" stroke="#6e7480" /></svg>
        </button>
        <button type="button" aria-label="Page Layout view" className="flex h-[17px] w-[19px] items-center justify-center bg-[#c6dcf6]">
          <svg width="12" height="12" viewBox="0 0 12 12"><path d="M0.500 0.500h11v11h-11z" fill="#dfe3e8" stroke="#6e7480" /><path d="M3.500 2.500h5v7h-5z" fill="#fff" stroke="#6e7480" /></svg>
        </button>
        <button type="button" aria-label="Page Break Preview" className="flex h-[17px] w-[18px] items-center justify-center bg-[#c6dcf6]">
          <svg width="12" height="12" viewBox="0 0 12 12"><path d="M0.500 0.500h11v11h-11z" fill="#dfe3e8" stroke="#6e7480" /><path d="M0.500 0.500h4v7h-4zM5.500 0.500h3v7h-3z" fill="#fff" stroke="#6e7480" /></svg>
        </button>
        <span className="ml-2 w-[36px] text-[#15325f]">124%</span>
        <button type="button" aria-label="Zoom out"><svg width="17" height="17" viewBox="0 0 17 17"><circle cx="8.500" cy="8.500" r="7" fill="#dbe8f8" stroke="#4a6a9c" /><path d="M5 8.500h7" stroke="#33496e" strokeWidth="2.500" /></svg></button>
        <div className="relative flex h-full w-[101px] items-center">
          <div className="h-[2px] w-full border-t border-[#4d74ad] bg-[#dceafc]" />
          <input type="range" aria-label="Zoom" min={10} max={400} defaultValue={124} className="absolute inset-0 w-full cursor-pointer opacity-0" />
          <svg width="10" height="13" viewBox="0 0 10 13" className="pointer-events-none absolute left-[49px] top-[3px]"><path d="M0.500 0.500h9v7.500L5 12 0.500 8z" fill="#dbe8f8" stroke="#4a6a9c" /><path d="M5 3v4" stroke="#6f8fbe" /></svg>
        </div>
        <button type="button" aria-label="Zoom in"><svg width="17" height="17" viewBox="0 0 17 17"><circle cx="8.500" cy="8.500" r="7" fill="#dbe8f8" stroke="#4a6a9c" /><path d="M5 8.500h7M8.500 5v7" stroke="#33496e" strokeWidth="2.500" /></svg></button>
      </div>
    </footer>
  );
}

/* ---------- Taskbar ---------- */

function Task({ label, width = "w-[58px]", tone = "open", children }: { label: string; width?: string; tone?: "open" | "active" | "alert" | "none"; children: React.ReactNode }) {
  const tones = {
    open: "border-[#9b918d] bg-[linear-gradient(100deg,#6f6561,#8a807c_25%,#544a46_55%,#40342f)]",
    active: "border-[#d8d2cf] bg-[linear-gradient(100deg,#a39c98,#c8c3c0_40%,#aaa39f_70%,#7e7571)]",
    alert: "border-[#f5e48b] bg-[linear-gradient(120deg,#f3e34c,#ef9a26_45%,#e46a1a_75%,#f1c52f)]",
    none: "border-transparent",
  };
  return (
    <button type="button" aria-label={label} className={`flex h-[38px] items-center justify-center rounded-[3px] border ${width} ${tones[tone]}`}>{children}</button>
  );
}

function StackEdge({ tone = "border-[#9b918d] bg-[#4a3f3a]" }: { tone?: string }) {
  return <span className={`h-[38px] w-[4px] rounded-r border-r ${tone}`} />;
}

function WindowsOrb() {
  return (
    <svg width="38" height="38" viewBox="0 0 38 38">
      <defs>
        <radialGradient id="start" cx="50%" cy="75%" r="75%">
          <stop offset="0" stopColor="#47c4ee" /><stop offset="0.450" stopColor="#1d6fae" /><stop offset="1" stopColor="#12355f" />
        </radialGradient>
      </defs>
      <circle cx="19" cy="19" r="17.500" fill="url(#start)" stroke="#a9c0cf" />
      <path d="M4 15C8 3 30 3 34 15c-9 5-21 5-30 0z" fill="#fff" opacity="0.350" />
      <path d="M11 12c3-2 5-1 7 0l-2 7c-2-1-4-2-7 0z" fill="#ef6b32" />
      <path d="M20 12c3 1 5 1 8-1l-2 8c-3 2-5 1-8 0z" fill="#8cc63f" />
      <path d="M9 21c3-2 5-1 7 0l-2 7c-2-1-5-2-7 0z" fill="#5cb3ee" />
      <path d="M17 22c3 1 5 1 8-1l-2 7c-3 2-5 1-8 0z" fill="#fdc82f" />
    </svg>
  );
}

function Taskbar() {
  return (
    <nav aria-label="Taskbar" className="flex h-10 shrink-0 items-center border-t border-[#222] bg-[linear-gradient(90deg,#8d7871_0,#85716a_4%,#382a24_9%,#2b211d_14%,#2a201c_50%,#31261f_75%,#292119_90%,#2e241f_92.5%,#857069_94%,#8c7770_100%)]">
      <button type="button" aria-label="Start" className="ml-2 mr-[14px] w-[38px]"><WindowsOrb /></button>
      <Task label="Sticky Notes" tone="active">
        <svg width="34" height="28" viewBox="0 0 34 28">
          <path d="M5 3l13 2-2 17-15-3z" fill="#8fd59a" /><path d="M9 6l16-2 2 14-16 5z" fill="#8cc9ee" /><path d="M13 10l16-4 4 14-16 5z" fill="#f7df62" /><path d="M14 12l15-4 1 3-14 4z" fill="#fff1a0" />
        </svg>
      </Task>
      <Task label="Snipping Tool" width="w-[63px]" tone="none">
        <svg width="32" height="32" viewBox="0 0 32 32">
          <ellipse cx="13" cy="9" rx="11" ry="8" fill="#f8f1f0" stroke="#c33a3a" strokeWidth="2" transform="rotate(-15 13 9)" />
          <path d="M11 2l8 19M4 15l18 4M14 4l5 16" stroke="#b3bfcb" strokeWidth="2" />
          <ellipse cx="18" cy="26" rx="3" ry="5" fill="none" stroke="#4f86b8" strokeWidth="2" /><ellipse cx="26" cy="22" rx="5" ry="3" fill="none" stroke="#4f86b8" strokeWidth="2" transform="rotate(35 26 22)" />
        </svg>
      </Task>
      <Task label="Media Player" width="w-[61px]" tone="none">
        <svg width="28" height="26" viewBox="0 0 28 26">
          <path d="M5 1h22v22H5z" fill="#5aa0d6" /><path d="M22 1v22M25 1v22" stroke="#cfe6f7" /><path d="M1 2h19v22H1z" fill="#a5d0ef" stroke="#5f95c0" />
          <circle cx="11" cy="13" r="8.500" fill="#ee7a22" stroke="#f9c79a" /><path d="M8.500 8.500v9l7-4.500z" fill="#fff" />
        </svg>
      </Task>
      <Task label="Component Services" width="w-[64px]" tone="none">
        <svg width="33" height="34" viewBox="0 0 33 34">
          <path d="M1 3v9c0 3 9 3 9 0V3z" fill="#f2c23c" /><ellipse cx="5.500" cy="3" rx="4.500" ry="2" fill="#fbe9a4" />
          <path d="M13 3.500h12v12M1.500 17v11h11" stroke="#4c9e3c" fill="none" strokeWidth="1.500" strokeDasharray="2 2" />
          <path d="M12 32l14-14M24 16l6 4" stroke="#c5ccd4" strokeWidth="3" /><path d="M14 18l14 14" stroke="#e6e1c4" strokeWidth="3" /><path d="M11 19l5-4 4 2-5 5z" fill="#aeb7c0" /><path d="M22 26l6 6" stroke="#d7a73a" strokeWidth="3" />
        </svg>
      </Task>
      <Task label="Telegram" width="w-[63px]" tone="none">
        <svg width="30" height="30" viewBox="0 0 30 30"><circle cx="15" cy="15" r="14.500" fill="#2ba0da" /><path d="M5 15L23 7l-3 16-5-4-3 3-1-5 9-7-11 7z" fill="#fff" /></svg>
      </Task>
      <Task label="Firefox">
        <svg width="32" height="32" viewBox="0 0 32 32">
          <circle cx="16" cy="16" r="14.500" fill="#e8652a" /><path d="M16 2c9 0 15 7 14 15-1 8-8 13-14 13 7-3 10-8 9-13z" fill="#f9b52c" />
          <circle cx="17" cy="12" r="10" fill="#1a6fae" /><path d="M17 2c7 0 10 6 9 10-3-2-6-1-7-5z" fill="#42aee0" />
          <path d="M2 9c2-1 4-1 6 1 3-1 6 0 8 2-1 2-4 2-4 4 2 4 7 4 11 1-1 6-6 9-11 8C5 24 1 17 2 9z" fill="#e6602a" /><path d="M3 17c3 7 9 9 15 7 4-1 6-4 7-7 1 8-6 12-12 11S4 23 3 17z" fill="#f0842c" />
        </svg>
      </Task>
      <div className="ml-1 flex">
        <Task label="Word" width="w-[50px]">
          <svg width="30" height="30" viewBox="0 0 30 30" className="overflow-visible"><path d="M2 28V6c0-4 2-5 5-5h19v5H10c-3 0-3 4-3 8v14z" fill="#d5e3f6" stroke="#3f69b0" /><path d="M9 5l19 3v21L7 27z" fill="#f6faff" stroke="#7f9cce" /><text x="9" y="18" fontSize="12" fontWeight="bold" fill="#2b56a5" fontFamily="Liberation Serif, serif">W</text><path d="M21 11h6M21 15h6M11 21h16M11 25h15" stroke="#3a64ae" strokeWidth="2" /></svg>
        </Task>
        <StackEdge /><StackEdge />
      </div>
      <Task label="Remote Desktop" width="ml-1 w-[58px]">
        <svg width="30" height="28" viewBox="0 0 30 28"><path d="M1 8l7-2v13l-7-1z" fill="#dfe5ea" stroke="#7c8892" /><path d="M8 2l21 1-1 17-18-2z" fill="#e7ecf0" stroke="#98a3ad" /><path d="M10 4l17 1-1 13-15-2z" fill="#1226c8" /><path d="M18 4.500l9 .5-1 13-4-1z" fill="#6688f0" /><ellipse cx="19" cy="24" rx="8" ry="3" fill="#e3e8ec" /><path d="M17 19h5v4h-5z" fill="#aeb7be" /></svg>
      </Task>
      <Task label="PDF Reader" width="ml-1 w-[58px]">
        <svg width="33" height="33" viewBox="0 0 33 33" className="overflow-visible"><path d="M1 0h24l7 7v26H1z" fill="#f58a1f" /><path d="M25 0v8h7z" fill="#8a4a13" /><path d="M23 7C15 2 8 7 8 13c0 7 8 10 13 6 3-2 3-6 1-9-2 0-5 1-6 3 2-1 3 1 2 3-2 3-6 1-6-3 0-4 5-7 11-6z" fill="#fff" /><text x="10" y="31" fontSize="8" fontWeight="bold" fill="#fff" fontFamily="Liberation Sans, sans-serif">PDF</text></svg>
      </Task>
      <div className="ml-1 flex">
        <Task label="LINE" width="w-[53px]" tone="alert">
          <svg width="32" height="32" viewBox="0 0 32 32"><rect width="32" height="32" rx="6" fill="#00b900" /><path d="M16 5c7 0 12 4 12 10 0 5-6 9-12 13l1-4C9 24 4 20 4 15 4 9 9 5 16 5z" fill="#fff" /><text x="16" y="17.500" textAnchor="middle" fontSize="8" fontWeight="bold" fill="#00a000" fontFamily="Liberation Sans, sans-serif">LINE</text></svg>
        </Task>
        <StackEdge tone="border-[#c9c0a8] bg-[#8a7a5a]" />
      </div>
      <Task label="Excel" tone="active" width="ml-1 w-[58px]">
        <svg width="32" height="30" viewBox="0 0 32 30"><path d="M2 28V6c0-4 2-5 5-5h19v5H10c-3 0-3 4-3 8v14z" fill="#d7ecd0" stroke="#5f9e4c" /><path d="M9 6l22 2-1 21-24-3z" fill="#f4fbf1" stroke="#79b167" /><path d="M21 11h3v3h-3zM26 11h3v3h-3zM21 16h3v4h-3zM26 16h3v4h-3zM10 22h5v4h-5zM16 22h4v4h-4zM21 22h3v4h-3zM26 22h3v4h-3z" fill="#69aa52" /><path d="M9 8h4l2 4 3-4h3l-5 6 4 6h-4l-2-4-3 4H8l5-6z" fill="#1c5d2b" /></svg>
      </Task>
      <div className="ml-auto flex h-full items-center text-[12px] leading-[17px] text-white">
        <button type="button" aria-label="Show hidden icons"><svg width="7" height="4" viewBox="0 0 7 4"><path d="M0 4h7L3.500 0z" fill="#fff" /></svg></button>
        <button type="button" aria-label="Network" className="ml-[14px]"><svg width="14" height="10" viewBox="0 0 14 10"><path d="M0 8h2v2H0zM3 6h2v4H3zM6 4h2v6H6zM9 2h2v8H9z" fill="#fff" /><path d="M12 0h2v10h-2z" fill="#999" /></svg></button>
        <button type="button" aria-label="Action Center" className="ml-2.5"><svg width="15" height="15" viewBox="0 0 15 15"><path d="M1.500 0v14" stroke="#fff" strokeWidth="1.500" /><path d="M2 1c4-2 5 2 11 0v7C8 10 6 6 2 8z" fill="#fff" /><circle cx="10" cy="10" r="4" fill="#d8202a" /><path d="M8 8l4 4M12 8l-4 4" stroke="#fff" strokeWidth="1.500" /></svg></button>
        <time className="ml-1 w-[75px] text-center">7:11 PM<br />9/9/2017</time>
        <button type="button" aria-label="Show desktop" className="h-full w-[14px] border border-[#5e4f4a] bg-gradient-to-br from-[#b9aaa4] to-[#75645e]" />
      </div>
    </nav>
  );
}

export default function App() {
  return (
    <div className={`flex h-screen flex-col overflow-hidden bg-[#bfdbff] ${UI}`}>
      <TitleBar />
      <TabBar />
      <Ribbon />
      <FormulaBar />
      <main className="flex min-h-0 flex-1">
        <div className="flex min-w-0 flex-1 flex-col">
          <Sheet />
          <SheetBar />
        </div>
        <VerticalScroll />
      </main>
      <StatusBar />
      <Taskbar />
    </div>
  );
}
